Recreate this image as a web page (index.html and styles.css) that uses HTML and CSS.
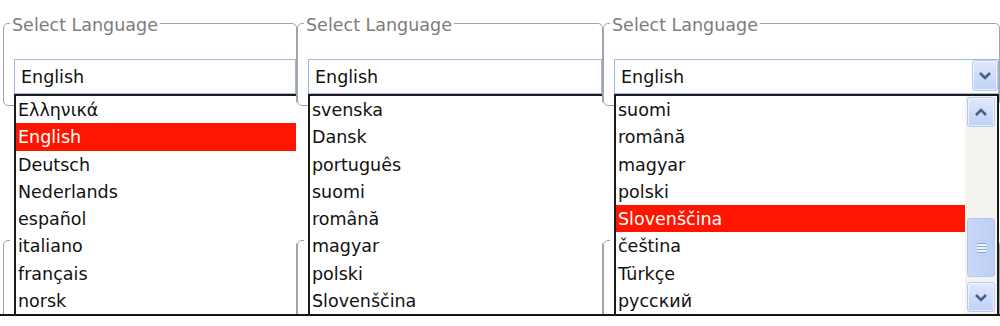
FILE: index.html
```html
<!DOCTYPE html>
<html lang="en">
<head>
    <meta charset="UTF-8">
    <meta name="viewport" content="width=device-width, initial-scale=1.0">
    <title>Select Language</title>
    <link rel="stylesheet" href="styles.css">
</head>
<body>
    <div class="panels">
        <!-- Panel 1: list opened near the top -->
        <div class="panel panel-1">
            <fieldset>
                <legend>Select Language</legend>
                <div class="combo">
                    <span class="combo-value">English</span>
                    <div class="dropdown">
                        <ul class="options">
                            <li>Ελληνικά</li>
                            <li class="selected">English</li>
                            <li>Deutsch</li>
                            <li>Nederlands</li>
                            <li>español</li>
                            <li>italiano</li>
                            <li>français</li>
                            <li>norsk</li>
                        </ul>
                    </div>
                </div>
            </fieldset>
            <!-- next group, mostly hidden behind the open list -->
            <fieldset class="second">
                <legend class="hidden-legend"><span class="tick"></span></legend>
            </fieldset>
        </div>

        <!-- Panel 2: list scrolled down -->
        <div class="panel panel-2">
            <fieldset>
                <legend>Select Language</legend>
                <div class="combo">
                    <span class="combo-value">English</span>
                    <div class="dropdown">
                        <ul class="options">
                            <li>svenska</li>
                            <li>Dansk</li>
                            <li>português</li>
                            <li>suomi</li>
                            <li>română</li>
                            <li>magyar</li>
                            <li>polski</li>
                            <li>Slovenščina</li>
                        </ul>
                    </div>
                </div>
            </fieldset>
            <fieldset class="second">
                <legend class="hidden-legend"><span class="tick"></span></legend>
            </fieldset>
        </div>

        <!-- Panel 3: full select with scrollbar -->
        <div class="panel panel-3">
            <fieldset>
                <legend>Select Language</legend>
                <div class="combo">
                    <span class="combo-value">English</span>
                    <span class="scroll-btn combo-btn">
                        <svg width="14" height="9" viewBox="0 0 14 9"><polyline points="2,2 7,7 12,2" fill="none" stroke="#4a5d86" stroke-width="2.6"/></svg>
                    </span>
                    <div class="dropdown framed">
                        <ul class="options">
                            <li>suomi</li>
                            <li>română</li>
                            <li>magyar</li>
                            <li>polski</li>
                            <li class="selected">Slovenščina</li>
                            <li>čeština</li>
                            <li>Türkçe</li>
                            <li>русский</li>
                        </ul>
                        <div class="scrollbar">
                            <span class="scroll-btn">
                                <svg width="14" height="9" viewBox="0 0 14 9"><polyline points="2,7 7,2 12,7" fill="none" stroke="#4a5d86" stroke-width="2.6"/></svg>
                            </span>
                            <div class="track">
                                <span class="thumb">
                                    <span class="grip"></span>
                                </span>
                            </div>
                            <span class="scroll-btn">
                                <svg width="14" height="9" viewBox="0 0 14 9"><polyline points="2,2 7,7 12,2" fill="none" stroke="#4a5d86" stroke-width="2.6"/></svg>
                            </span>
                        </div>
                    </div>
                </div>
            </fieldset>
            <fieldset class="second">
                <legend class="hidden-legend"><span class="tick"></span></legend>
            </fieldset>
        </div>
    </div>
</body>
</html>
```

FILE: styles.css
```css
body {
    margin: 0;
    background: #fff;
    font-family: "DejaVu Sans", Verdana, sans-serif;
}

.panels {
    display: flex;
    height: 314px;
    overflow: hidden;
    border-bottom: 2px solid #161616; /* bottom edge of the lists */
}

.panel {
    flex-shrink: 0;
    box-sizing: border-box;
    padding-top: 11px;
    overflow: hidden;
}

.panel-1 {
    width: 297px;
    padding-left: 3px;
}

.panel-2 {
    width: 306px;
}

.panel-3 {
    width: 397px;
}

fieldset {
    margin: 0;
    padding: 0 0 11px 10px;
    min-width: 0;
    border: 1px solid #a4a4a4;
    border-radius: 5px;
}

fieldset.second {
    margin-top: 122px;
    height: 120px;
}

legend {
    margin-left: -4px;
    padding: 4px 2px 0;
    font-size: 17.5px;
    line-height: 20px;
    color: #7c7c7c;
}

.hidden-legend {
    width: 140px;
    height: 20px;
}

/* sliver of the hidden legend text, peeking out left of the list */
.tick {
    display: block;
    width: 2px;
    height: 4px;
    margin: 3px 0 0 3px;
    background: #555;
}

.combo {
    position: relative;
    display: flex;
    height: 35px;
    margin-top: 24px;
    box-sizing: border-box;
    border: 1px solid #a2b8da;
}

.combo-value {
    flex: 1;
    padding: 2px 0 0 6px;
    font-size: 17.5px;
    line-height: 31px;
    color: #111;
}

/* opened list, lies over whatever follows */
.dropdown {
    position: absolute;
    top: 34px;
    left: -1px;
    right: -1px;
    height: 220px;
    box-sizing: border-box;
    display: flex;
    background: #fff;
    border-top: 2px solid #1b1b1b;
    border-left: 2px solid #1b1b1b;
    z-index: 1;
}

.dropdown.framed {
    border-right: 2px solid #1b1b1b;
}

.options {
    flex: 1;
    list-style: none;
    margin: 0;
    padding: 0;
}

.options li {
    height: 27.25px;
    box-sizing: border-box;
    padding: 2px 0 0 2px;
    line-height: 25.25px;
    font-size: 17.5px;
    color: #111;
    white-space: nowrap;
}

.options li.selected {
    background: #ff1500;
    color: #fff;
}

/* XP style scroll buttons */
.scroll-btn {
    display: flex;
    align-items: center;
    justify-content: center;
    height: 30px;
    box-sizing: border-box;
    border: 1px solid #b7caf0;
    border-radius: 3px;
    background: linear-gradient(#dfe8fd, #bfd2f7);
    box-shadow: inset 0 0 0 1px rgba(255, 255, 255, 0.6);
}

.combo-btn {
    width: 26px;
    height: 31px;
}

.scrollbar {
    width: 32px;
    box-sizing: border-box;
    padding: 1px 2px 2px;
    display: flex;
    flex-direction: column;
    background: #f5f3ee;
}

.track {
    flex: 1;
    display: flex;
    flex-direction: column;
    justify-content: flex-end;
    padding-bottom: 5px;
}

.thumb {
    height: 59px;
    box-sizing: border-box;
    border: 1px solid #b4c7ef;
    border-radius: 3px;
    background: linear-gradient(90deg, #c9d8f8, #bccff6);
    display: flex;
    align-items: center;
    justify-content: center;
}

.grip {
    width: 9px;
    height: 10px;
    background: repeating-linear-gradient(#8fa6d4 0 1px, #eef3fe 1px 3px);
}
```
